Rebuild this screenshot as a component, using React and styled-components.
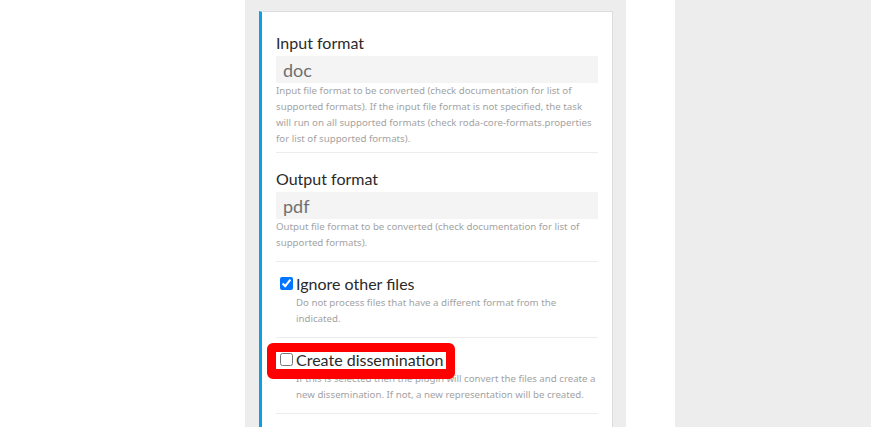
import React from "react";
import styled, { createGlobalStyle } from "styled-components";

const GlobalStyle = createGlobalStyle`
  html, body {
    margin: 0;
    padding: 0;
    height: 100%;
    overflow: hidden;
    background: #ffffff;
    font-family: Lato, "Noto Sans", sans-serif;
  }
`;

const Page = styled.div`
  display: flex;
  height: 100vh;
`;

const LeftGutter = styled.div`
  width: 245px;
  flex-shrink: 0;
  background: #ffffff;
`;

const Column = styled.div`
  width: 381px;
  flex-shrink: 0;
  background: #ededed;
  padding: 11px 13px 0 14px;
  box-sizing: border-box;
`;

const Spacer = styled.div`
  width: 49px;
  flex-shrink: 0;
  background: #ffffff;
`;

const SidePanel = styled.div`
  flex: 1;
  background: #ededed;
`;

const Panel = styled.div`
  background: #ffffff;
  border: 1px solid #dcdcdc;
  border-left: 3px solid #0ba0e4;
  padding: 5px 14px 60px 14px;
`;

const Section = styled.div`
  padding-top: ${(p) => (p.$check ? "11px" : "16px")};
  padding-bottom: ${(p) => (p.$tight ? "5px" : "10px")};
  border-bottom: 1px solid #ececec;
`;

const Label = styled.div`
  font-size: 16px;
  line-height: 20px;
  color: #2a2a2a;
  margin-bottom: 3px;
`;

const Field = styled.input`
  display: block;
  width: 100%;
  box-sizing: border-box;
  height: 27px;
  border: none;
  outline: none;
  background: #f4f4f4;
  padding: 0 7px;
  font-family: inherit;
  font-size: 18px;
  color: #707070;
`;

const Help = styled.div`
  font-family: "Noto Sans", "Open Sans", sans-serif;
  font-size: 9.7px;
  line-height: 16px;
  color: #a3a3a3;
  padding-left: ${(p) => (p.$indent ? "20px" : "0")};
  margin-top: ${(p) => (p.$indent ? "2px" : "0")};
`;

const CheckRow = styled.label`
  position: relative;
  display: flex;
  align-items: center;
  height: 20px;
  font-size: 16px;
  color: #2a2a2a;

  input {
    margin: 0 3px 0 4px;
    width: 13px;
    height: 13px;
  }
`;

const Highlight = styled.div`
  position: absolute;
  left: -9px;
  top: -6px;
  width: 188px;
  height: 36px;
  box-sizing: border-box;
  border: 9px solid #ff0000;
  border-bottom-width: 10px;
  border-radius: 6px;
  pointer-events: none;
`;

const TextField = ({ label, value, help, tight }) => (
  <Section $tight={tight}>
    <Label>{label}</Label>
    <Field readOnly value={value} />
    <Help>{help}</Help>
  </Section>
);

const CheckField = ({ label, checked, help, highlight }) => (
  <Section $check>
    <CheckRow>
      <input type="checkbox" defaultChecked={checked} />
      {label}
      {highlight ? <Highlight /> : null}
    </CheckRow>
    <Help $indent>{help}</Help>
  </Section>
);

export default function App() {
  return (
    <>
      <GlobalStyle />
      <Page>
        <LeftGutter />
        <Column>
          <Panel>
            <TextField
              tight
              label="Input format"
              value="doc"
              help="Input file format to be converted (check documentation for list of supported formats). If the input file format is not specified, the task will run on all supported formats (check roda-core-formats.properties for list of supported formats)."
            />
            <TextField
              label="Output format"
              value="pdf"
              help="Output file format to be converted (check documentation for list of supported formats)."
            />
            <CheckField
              checked
              label="Ignore other files"
              help="Do not process files that have a different format from the indicated."
            />
            <CheckField
              highlight
              label="Create dissemination"
              help="If this is selected then the plugin will convert the files and create a new dissemination. If not, a new representation will be created."
            />
          </Panel>
        </Column>
        <Spacer />
        <SidePanel />
      </Page>
    </>
  );
}
